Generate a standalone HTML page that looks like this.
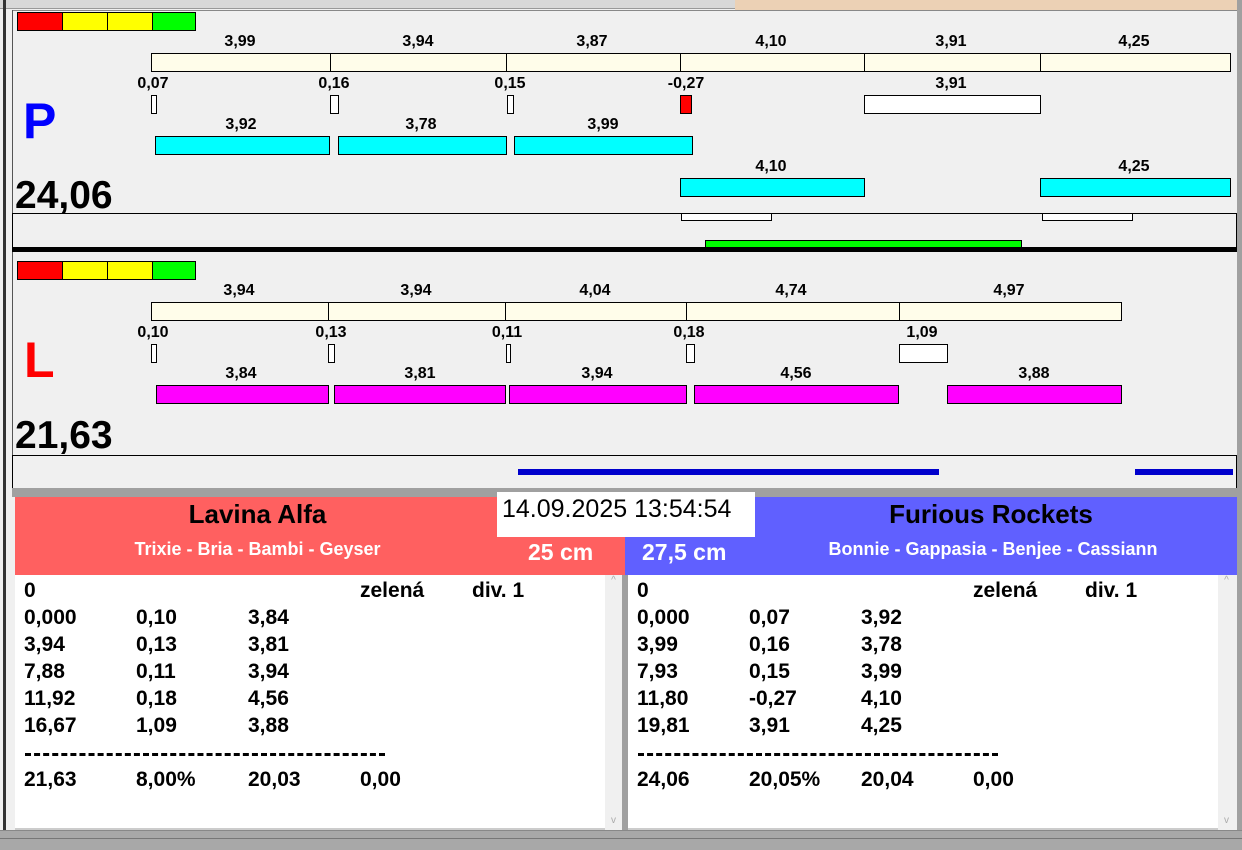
<!DOCTYPE html>
<html><head><meta charset="utf-8"><style>
*{margin:0;padding:0;box-sizing:border-box}
body{width:1242px;height:850px;position:relative;overflow:hidden;background:#f0f0f0;font-family:"Liberation Sans",Arial,sans-serif}
.a{position:absolute}
.b{position:absolute;border:1px solid #000}
.t{position:absolute;font-weight:bold;font-size:16px;transform:translateX(-50%);white-space:nowrap;line-height:16px;margin-top:2px}
.r{position:absolute;font-weight:bold;font-size:21px;line-height:22px;white-space:nowrap}
.c{background:#fffdea}.cy{background:#00ffff}.mg{background:#ff00ff}.w{background:#fff}
</style></head><body>
<div class="a" style="left:0;top:0;width:735px;height:9px;background:#d8d8d8;border-bottom:1px solid #999"></div>
<div class="a" style="left:735px;top:0;width:502px;height:11px;background:#ecd1b5"></div>
<div class="a" style="left:3px;top:0;width:3px;height:850px;background:#333"></div>
<div class="a" style="left:1237px;top:0;width:5px;height:850px;background:#a0a0a0"></div>
<div class="a" style="left:12px;top:10px;width:1225px;height:1px;background:#888"></div>
<div class="a" style="left:12px;top:10px;width:1px;height:480px;background:#555"></div>

<div class="b" style="left:17px;top:12px;width:46px;height:19px;background:#f00"></div>
<div class="b" style="left:62px;top:12px;width:46px;height:19px;background:#ff0"></div>
<div class="b" style="left:107px;top:12px;width:46px;height:19px;background:#ff0"></div>
<div class="b" style="left:152px;top:12px;width:44px;height:19px;background:#0f0"></div>
<div class="t" style="left:240px;top:32px">3,99</div><div class="t" style="left:418px;top:32px">3,94</div><div class="t" style="left:592px;top:32px">3,87</div><div class="t" style="left:771px;top:32px">4,10</div><div class="t" style="left:951px;top:32px">3,91</div><div class="t" style="left:1134px;top:32px">4,25</div>
<div class="b c" style="left:151px;top:53px;width:180px;height:19px"></div><div class="b c" style="left:330px;top:53px;width:177px;height:19px"></div><div class="b c" style="left:506px;top:53px;width:175px;height:19px"></div><div class="b c" style="left:680px;top:53px;width:185px;height:19px"></div><div class="b c" style="left:864px;top:53px;width:177px;height:19px"></div><div class="b c" style="left:1040px;top:53px;width:191px;height:19px"></div>
<div class="t" style="left:153px;top:74px">0,07</div><div class="t" style="left:334px;top:74px">0,16</div><div class="t" style="left:510px;top:74px">0,15</div><div class="t" style="left:686px;top:74px">-0,27</div><div class="t" style="left:951px;top:74px">3,91</div>
<div class="b w" style="left:151px;top:95px;width:6px;height:19px"></div><div class="b w" style="left:330px;top:95px;width:9px;height:19px"></div><div class="b w" style="left:507px;top:95px;width:7px;height:19px"></div><div class="b" style="left:680px;top:95px;width:12px;height:19px;background:#f00"></div><div class="b w" style="left:864px;top:95px;width:177px;height:19px"></div>
<div class="a" style="left:23px;top:93px;font-size:50px;font-weight:bold;color:#0000ff;line-height:56px">P</div>
<div class="t" style="left:241px;top:115px">3,92</div><div class="t" style="left:421px;top:115px">3,78</div><div class="t" style="left:603px;top:115px">3,99</div>
<div class="b cy" style="left:155px;top:136px;width:175px;height:19px"></div><div class="b cy" style="left:338px;top:136px;width:169px;height:19px"></div><div class="b cy" style="left:514px;top:136px;width:179px;height:19px"></div>
<div class="t" style="left:771px;top:157px">4,10</div><div class="t" style="left:1134px;top:157px">4,25</div>
<div class="b cy" style="left:680px;top:178px;width:185px;height:19px"></div><div class="b cy" style="left:1040px;top:178px;width:191px;height:19px"></div>
<div class="a" style="left:15px;top:175px;font-size:39px;font-weight:bold;line-height:42px">24,06</div>
<div class="a" style="left:12px;top:213px;width:1225px;height:36px;border:1px solid #000;border-bottom:none"></div>
<div class="b w" style="left:681px;top:213px;width:91px;height:8px"></div><div class="b w" style="left:1042px;top:213px;width:91px;height:8px"></div>
<div class="b" style="left:705px;top:240px;width:317px;height:8px;background:#0f0"></div>
<div class="a" style="left:12px;top:247px;width:1225px;height:5px;background:#000"></div>

<div class="b" style="left:17px;top:261px;width:46px;height:19px;background:#f00"></div>
<div class="b" style="left:62px;top:261px;width:46px;height:19px;background:#ff0"></div>
<div class="b" style="left:107px;top:261px;width:46px;height:19px;background:#ff0"></div>
<div class="b" style="left:152px;top:261px;width:44px;height:19px;background:#0f0"></div>
<div class="t" style="left:239px;top:281px">3,94</div><div class="t" style="left:416px;top:281px">3,94</div><div class="t" style="left:595px;top:281px">4,04</div><div class="t" style="left:791px;top:281px">4,74</div><div class="t" style="left:1009px;top:281px">4,97</div>
<div class="b c" style="left:151px;top:302px;width:178px;height:19px"></div><div class="b c" style="left:328px;top:302px;width:178px;height:19px"></div><div class="b c" style="left:505px;top:302px;width:182px;height:19px"></div><div class="b c" style="left:686px;top:302px;width:214px;height:19px"></div><div class="b c" style="left:899px;top:302px;width:223px;height:19px"></div>
<div class="t" style="left:153px;top:323px">0,10</div><div class="t" style="left:331px;top:323px">0,13</div><div class="t" style="left:507px;top:323px">0,11</div><div class="t" style="left:689px;top:323px">0,18</div><div class="t" style="left:922px;top:323px">1,09</div>
<div class="b w" style="left:151px;top:344px;width:6px;height:19px"></div><div class="b w" style="left:328px;top:344px;width:7px;height:19px"></div><div class="b w" style="left:506px;top:344px;width:5px;height:19px"></div><div class="b w" style="left:686px;top:344px;width:9px;height:19px"></div><div class="b w" style="left:899px;top:344px;width:49px;height:19px"></div>
<div class="a" style="left:24px;top:332px;font-size:50px;font-weight:bold;color:#ff0000;line-height:56px">L</div>
<div class="t" style="left:241px;top:364px">3,84</div><div class="t" style="left:420px;top:364px">3,81</div><div class="t" style="left:597px;top:364px">3,94</div><div class="t" style="left:796px;top:364px">4,56</div><div class="t" style="left:1034px;top:364px">3,88</div>
<div class="b mg" style="left:156px;top:385px;width:173px;height:19px"></div><div class="b mg" style="left:334px;top:385px;width:172px;height:19px"></div><div class="b mg" style="left:509px;top:385px;width:178px;height:19px"></div><div class="b mg" style="left:694px;top:385px;width:205px;height:19px"></div><div class="b mg" style="left:947px;top:385px;width:175px;height:19px"></div>
<div class="a" style="left:15px;top:415px;font-size:39px;font-weight:bold;line-height:42px">21,63</div>
<div class="a" style="left:12px;top:455px;width:1225px;height:34px;border:1px solid #000;border-bottom:none"></div>
<div class="a" style="left:518px;top:469px;width:421px;height:6px;background:#0000cc"></div>
<div class="a" style="left:1135px;top:469px;width:98px;height:6px;background:#0000cc"></div>
<div class="a" style="left:12px;top:488px;width:1230px;height:9px;background:#a0a0a0"></div>

<div class="a" style="left:15px;top:497px;width:610px;height:78px;background:#ff6060"></div>
<div class="a" style="left:625px;top:497px;width:612px;height:78px;background:#6060ff"></div>
<div class="a" style="left:497px;top:492px;width:258px;height:45px;background:#fff;font-size:25px;line-height:34px;padding-left:5px">14.09.2025 13:54:54</div>
<div class="a" style="left:15px;top:497px;width:485px;text-align:center;font-size:26px;font-weight:bold;line-height:34px">Lavina Alfa</div>
<div class="a" style="left:15px;top:537px;width:485px;text-align:center;font-size:18px;font-weight:bold;color:#fff;line-height:24px">Trixie - Bria - Bambi - Geyser</div>
<div class="a" style="left:528px;top:538px;font-size:23px;font-weight:bold;color:#fff;line-height:28px">25 cm</div>
<div class="a" style="left:642px;top:538px;font-size:23px;font-weight:bold;color:#fff;line-height:28px">27,5 cm</div>
<div class="a" style="left:755px;top:497px;width:472px;text-align:center;font-size:26px;font-weight:bold;line-height:34px">Furious Rockets</div>
<div class="a" style="left:755px;top:537px;width:476px;text-align:center;font-size:18px;font-weight:bold;color:#fff;line-height:24px">Bonnie - Gappasia - Benjee - Cassiann</div>

<div class="a" style="left:15px;top:575px;width:607px;height:255px;background:#fff;border-bottom:2px solid #ccc"></div>
<div class="a" style="left:605px;top:575px;width:17px;height:255px;background:#f0f0f0;color:#aaa;font-size:10px;text-align:center">^<div style="position:absolute;bottom:4px;width:17px">v</div></div>
<div class="a" style="left:622px;top:575px;width:6px;height:255px;background:#a0a0a0"></div>
<div class="a" style="left:628px;top:575px;width:607px;height:255px;background:#fff;border-bottom:2px solid #ccc"></div>
<div class="a" style="left:1218px;top:575px;width:17px;height:255px;background:#f0f0f0;color:#aaa;font-size:10px;text-align:center">^<div style="position:absolute;bottom:4px;width:17px">v</div></div>
<div class="a" style="left:0;top:830px;width:1242px;height:20px;background:#a8a8a8;border-top:1px solid #888"></div>
<div class="a" style="left:0;top:838px;width:1242px;height:1px;background:#777"></div>

<div class="r" style="left:24px;top:580px">0</div><div class="r" style="left:360px;top:580px">zelená</div><div class="r" style="left:472px;top:580px">div. 1</div>
<div class="r" style="left:24px;top:607px">0,000</div><div class="r" style="left:136px;top:607px">0,10</div><div class="r" style="left:248px;top:607px">3,84</div>
<div class="r" style="left:24px;top:634px">3,94</div><div class="r" style="left:136px;top:634px">0,13</div><div class="r" style="left:248px;top:634px">3,81</div>
<div class="r" style="left:24px;top:661px">7,88</div><div class="r" style="left:136px;top:661px">0,11</div><div class="r" style="left:248px;top:661px">3,94</div>
<div class="r" style="left:24px;top:688px">11,92</div><div class="r" style="left:136px;top:688px">0,18</div><div class="r" style="left:248px;top:688px">4,56</div>
<div class="r" style="left:24px;top:715px">16,67</div><div class="r" style="left:136px;top:715px">1,09</div><div class="r" style="left:248px;top:715px">3,88</div>
<div class="a" style="left:25px;top:753px;width:360px;border-top:3px dashed #000"></div>
<div class="r" style="left:24px;top:769px">21,63</div><div class="r" style="left:136px;top:769px">8,00%</div><div class="r" style="left:248px;top:769px">20,03</div><div class="r" style="left:360px;top:769px">0,00</div>

<div class="r" style="left:637px;top:580px">0</div><div class="r" style="left:973px;top:580px">zelená</div><div class="r" style="left:1085px;top:580px">div. 1</div>
<div class="r" style="left:637px;top:607px">0,000</div><div class="r" style="left:749px;top:607px">0,07</div><div class="r" style="left:861px;top:607px">3,92</div>
<div class="r" style="left:637px;top:634px">3,99</div><div class="r" style="left:749px;top:634px">0,16</div><div class="r" style="left:861px;top:634px">3,78</div>
<div class="r" style="left:637px;top:661px">7,93</div><div class="r" style="left:749px;top:661px">0,15</div><div class="r" style="left:861px;top:661px">3,99</div>
<div class="r" style="left:637px;top:688px">11,80</div><div class="r" style="left:749px;top:688px">-0,27</div><div class="r" style="left:861px;top:688px">4,10</div>
<div class="r" style="left:637px;top:715px">19,81</div><div class="r" style="left:749px;top:715px">3,91</div><div class="r" style="left:861px;top:715px">4,25</div>
<div class="a" style="left:638px;top:753px;width:360px;border-top:3px dashed #000"></div>
<div class="r" style="left:637px;top:769px">24,06</div><div class="r" style="left:749px;top:769px">20,05%</div><div class="r" style="left:861px;top:769px">20,04</div><div class="r" style="left:973px;top:769px">0,00</div>
</body></html>
